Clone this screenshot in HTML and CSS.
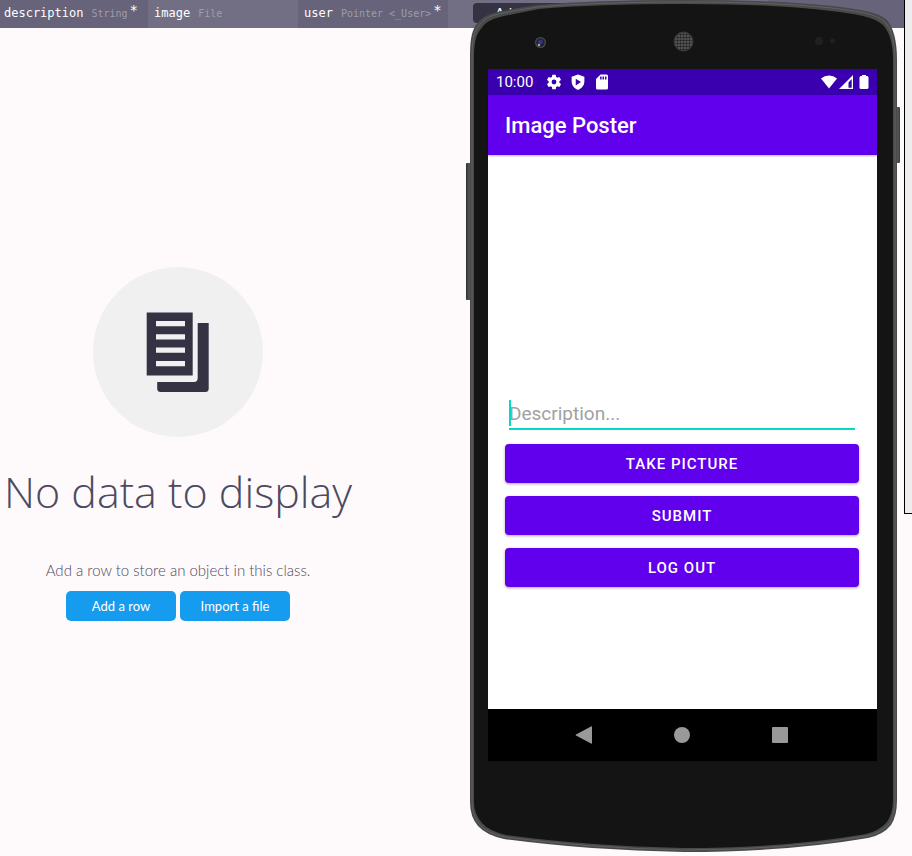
FILE: index.html
```html
<!DOCTYPE html>
<html lang="en">
<head>
<meta charset="utf-8">
<title>Image Poster</title>
<link rel="stylesheet" href="styles.css">
</head>
<body>
<header class="columns">
  <div class="column"><span class="name">description</span><span class="type">String</span><span class="required">*</span></div>
  <div class="column"><span class="name">image</span><span class="type">File</span></div>
  <div class="column"><span class="name">user</span><span class="type">Pointer &lt;_User&gt;</span><span class="required">*</span></div>
  <div class="column-actions"><button class="add-column" type="button">Add</button></div>
  <div class="column-rest"></div>
</header>

<main class="empty">
  <div class="empty-icon">
    <svg width="64" height="82" viewBox="0 0 64 82" aria-hidden="true">
      <path fill="#343243" fill-rule="evenodd" d="M.7 1.500h46v63h-46zM10 10v5.300h29V10zM10 23.300v5.300h29v-5.300zM10 36.500v5.300h29v-5.300zM10 50v5.300h29V50z"/>
      <path fill="#343243" d="M51.700 12h11v65.500q0 3.500-3.500 3.500H14.700q-3.500 0-3.500-3.500V71H48q3.700 0 3.700-4z"/>
    </svg>
  </div>
  <h1>No data to display</h1>
  <p>Add a row to store an object in this class.</p>
  <div class="empty-actions">
    <button type="button">Add a row</button>
    <button type="button">Import a file</button>
  </div>
</main>

<aside class="side-panel"></aside>

<section class="phone" aria-label="Phone">
  <svg class="frame" viewBox="0 0 435 853" preserveAspectRatio="none" aria-hidden="true">
    <defs>
      <linearGradient id="key"><stop offset="0" stop-color="#2c2d2d"/><stop offset=".5" stop-color="#555757"/><stop offset="1" stop-color="#3b3c3c"/></linearGradient>
      <pattern id="mesh" width="3" height="3" patternUnits="userSpaceOnUse"><rect width="3" height="3" fill="#555"/><circle cx="1.500" cy="1.500" r="1.100" fill="#1c1c1c"/></pattern>
    </defs>
    <rect x="0" y="163" width="6" height="137" rx="1" fill="url(#key)"/>
    <rect x="429" y="107" width="5" height="56" rx="1" fill="url(#key)"/>
    <path fill="#484949" d="M4 60C4 42 5 32 10 25Q16 15 31 12Q50 8 71 5Q130 0 218 0Q310 0 367 6Q385 8 400 11Q414 14 421 20Q431 32 431 60V800Q431 816 425 825Q417 835 402 838Q320 852 218 852Q120 850 38 839Q20 835 12 826Q4 817 4 802Z"/>
    <path fill="none" stroke="#606161" stroke-width="1" d="M6 60C6 43 7 34 12 27Q18 17 32 14Q51 10 72 7Q130 2 218 2Q310 2 366 8Q384 10 399 13Q412 16 419 22Q429 33 429 60V800Q429 815 423 824Q415 833 401 836Q320 850 218 850Q120 848 39 837Q21 833 14 825Q6 816 6 802Z"/>
    <path fill="#141414" d="M8 60C8 45 9 37 14 30Q20 20 34 17Q52 13 73 9Q130 4 218 4Q310 4 365 11Q383 13 397 16Q410 19 417 25Q427 36 427 60V800Q427 813 421 822Q413 831 400 834Q320 848 218 848Q120 846 40 835Q23 831 16 823Q8 814 8 802Z"/>
    <circle cx="74.500" cy="42.500" r="5.500" fill="#4a4a4d"/>
    <circle cx="74.500" cy="42.500" r="4.200" fill="#22222b"/>
    <circle cx="74.500" cy="42" r="2.300" fill="#34348c"/>
    <circle cx="73" cy="45" r="1.200" fill="#a5a5b5"/>
    <circle cx="217.500" cy="41.500" r="9.500" fill="url(#mesh)" stroke="#3a3a3a"/>
    <circle cx="353" cy="41" r="4" fill="#202020"/>
    <circle cx="366.500" cy="41" r="2.500" fill="#202020"/>
  </svg>

  <div class="screen">
    <div class="status">
      <span class="clock">10:00</span>
      <svg width="18" height="18" viewBox="0 0 24 24" aria-hidden="true"><path fill="#fff" d="M19.140 12.940a7 7 0 0 0 0-1.880l2.030-1.580a.5.5 0 0 0 .12-.61l-1.920-3.320a.5.5 0 0 0-.59-.22l-2.390.96a7 7 0 0 0-1.620-.94l-.36-2.540a.5.5 0 0 0-.48-.41h-3.840a.5.5 0 0 0-.47.410l-.36 2.540a7 7 0 0 0-1.620.940l-2.390-.96a.5.5 0 0 0-.59.220L2.740 8.870a.5.5 0 0 0 .12.610l2.030 1.580a7 7 0 0 0 0 1.880l-2.030 1.580a.5.5 0 0 0-.12.610l1.920 3.320c.12.220.37.290.59.220l2.390-.96c.5.380 1.030.700 1.620.940l.36 2.540c.05.240.24.410.48.410h3.840c.24 0 .44-.17.470-.41l.36-2.540a7 7 0 0 0 1.620-.94l2.390.96c.22.080.47 0 .59-.22l1.920-3.320a.5.5 0 0 0-.12-.61zM12 15.200a3.200 3.200 0 1 1 0-6.400 3.200 3.200 0 0 1 0 6.400z"/></svg>
      <svg width="18" height="18" viewBox="0 0 24 24" aria-hidden="true"><path fill="#fff" fill-rule="evenodd" d="M12 2l8.500 3v6c0 5.600-3.500 9.600-8.500 11.500C7 20.600 3.500 16.600 3.500 11V5zM9 7.500v9l7-4.500z"/></svg>
      <svg width="18" height="18" viewBox="0 0 24 24" aria-hidden="true"><path fill="#fff" fill-rule="evenodd" d="M20 4q0-2-2-2h-8L4 8v12q0 2 2 2h12q2 0 2-2zM9.500 4.500v4h2v-4zM12.700 4.500v4h2v-4zM16 4.500v4h2v-4z"/></svg>
      <span class="spacer"></span>
      <svg width="16" height="14" viewBox="0 0 16 14" aria-hidden="true"><path fill="#fff" d="M8 13.500L0 3.500Q3.500.5 8 .5t8 3z"/></svg>
      <svg width="15" height="14" viewBox="0 0 15 14" aria-hidden="true"><path fill="#fff" fill-rule="evenodd" d="M14 0v14H0zM12.700 4L9.500 7.500v5.200h3.200z"/></svg>
      <svg class="battery" width="10" height="14" viewBox="0 0 10 14" aria-hidden="true"><path fill="#fff" d="M3 0h4v1h1q1.500 0 1.500 1.500V12.500q0 1.500-1.500 1.500H2Q.5 14 .5 12.500v-10Q.5 1 2 1h1z"/></svg>
    </div>
    <div class="toolbar">Image Poster</div>
    <form class="form">
      <div class="field"><input type="text" aria-label="Description" placeholder="Description..."><span class="caret"></span></div>
      <button type="button">TAKE PICTURE</button>
      <button type="button">SUBMIT</button>
      <button type="button">LOG OUT</button>
    </form>
    <nav class="nav">
      <svg width="18" height="18" viewBox="0 0 18 18" aria-hidden="true"><path fill="#999" d="M17 1v16q0 1-1 .5L1 9.500q-1-.5 0-1L16 .5q1-.5 1 .5z"/></svg>
      <svg width="18" height="18" viewBox="0 0 18 18" aria-hidden="true"><circle cx="9" cy="9" r="8" fill="#999"/></svg>
      <svg width="18" height="18" viewBox="0 0 18 18" aria-hidden="true"><rect x="1" y="1" width="16" height="16" rx="1" fill="#999"/></svg>
    </nav>
  </div>
</section>
</body>
</html>
```
FILE: styles.css
```css
* { box-sizing: border-box; }

body {
  position: relative;
  margin: 0;
  min-height: 100vh;
  background: #fefafb;
  font-family: Roboto, "Liberation Sans", sans-serif;
}

button { border: 0; cursor: pointer; }

.columns {
  display: flex;
  height: 28px;
  background: #66637a;
  font-family: "DejaVu Sans Mono", monospace;
}

.column {
  flex: none;
  display: flex;
  align-items: center;
  width: 150px;
  padding: 0 0 2px 6px;
}

.column:first-child { width: 148px; padding-left: 4px; }
.column:nth-child(even), .column-actions { background: #726f85; }

.name { font-size: 12px; color: #fff; }
.type { margin-left: 8px; font-size: 10px; color: #9f9dab; }
.required { align-self: flex-start; margin-left: 2px; font-size: 14px; line-height: 20px; color: #fff; }

.column-actions { width: 320px; padding: 3px 25px; }

.add-column {
  width: 90px;
  height: 20px;
  border-radius: 4px;
  background: #343243;
  color: #fff;
  font: 14px/20px Lato, sans-serif;
  padding: 0 22px;
  text-align: left;
}

.empty {
  display: flex;
  flex-direction: column;
  align-items: center;
  margin-right: 556px;
  padding-top: 239px;
  white-space: nowrap;
  color: #4c4a60;
}

.empty-icon {
  display: flex;
  align-items: center;
  justify-content: center;
  width: 170px;
  height: 170px;
  border-radius: 50%;
  background: #f1f0f1;
}

.empty h1 {
  margin: 23px 0 0;
  font: 300 43px/64px "Open Sans", sans-serif;
}

.empty p {
  margin: 36px 0 0;
  font: 300 15px/20px Lato, sans-serif;
}

.empty-actions {
  display: flex;
  gap: 4px;
  margin-top: 11px;
}

.empty-actions button {
  width: 110px;
  height: 30px;
  padding: 0;
  border-radius: 5px;
  background: #169cee;
  color: #fff;
  font: 13px/20px Lato, sans-serif;
}

.side-panel {
  position: absolute;
  top: 0;
  right: 0;
  width: 8px;
  height: 514px;
  border: solid #000;
  border-width: 0 0 1px 1px;
  background: #eee;
}

.phone {
  position: absolute;
  top: 0;
  right: 11px;
  width: 435px;
  padding: 69px 24px 92px 22px;
}

.frame {
  position: absolute;
  top: 0;
  left: 0;
  width: 100%;
  height: 100%;
}

.screen { position: relative; background: #fff; }

.status {
  display: flex;
  align-items: center;
  height: 26px;
  padding: 0 8px;
  background: #3a00b0;
  color: #fff;
}

.clock { margin-right: 6px; font-size: 15px; }
.status svg { margin-left: 6px; }
.spacer { flex: 1; }
.spacer ~ svg { margin-left: 2px; }
.status .battery { margin-left: 5px; }

.toolbar {
  height: 60px;
  padding: 0 17px;
  background: #6100ed;
  box-shadow: 0 1px 2px rgba(0, 0, 0, .3);
  color: #fff;
  font-size: 22px;
  font-weight: 500;
  line-height: 62px;
}

.form {
  display: flex;
  flex-direction: column;
  gap: 13px;
  min-height: 554px;
  padding: 242px 18px 0 17px;
}

.field { position: relative; margin: 0 4px 1px; }

.field input {
  display: block;
  width: 100%;
  height: 33px;
  padding: 2px 0 0;
  border: 0;
  border-bottom: 2px solid #03dac6;
  background: transparent;
  font: 19px/29px Roboto, sans-serif;
  outline: 0;
}

.field input::placeholder { color: #a1a1a1; opacity: 1; }

.caret {
  position: absolute;
  top: 3px;
  left: 0;
  width: 2px;
  height: 26px;
  background: #03dac6;
}

.form button {
  height: 39px;
  border-radius: 4px;
  background: #6100ed;
  box-shadow: 0 1px 3px rgba(0, 0, 0, .35);
  color: #fff;
  font: 500 15px/20px Roboto, sans-serif;
  letter-spacing: 1px;
}

.nav {
  display: flex;
  align-items: center;
  justify-content: center;
  gap: 80px;
  height: 52px;
  padding-right: 2px;
  background: #000;
}
```
